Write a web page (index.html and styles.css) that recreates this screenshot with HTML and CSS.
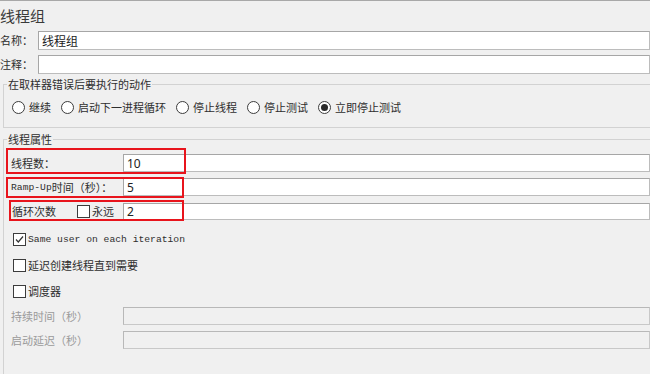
FILE: index.html
```html
<!DOCTYPE html>
<html lang="zh">
<head>
<meta charset="utf-8">
<link rel="stylesheet" href="styles.css">
</head>
<body>
<div class="page">
  <div class="title">线程组</div>
  <div class="field-row">
    <span class="lbl">名称：</span><span class="input">线程组</span>
  </div>
  <div class="field-row second">
    <span class="lbl">注释：</span><span class="input"></span>
  </div>

  <fieldset class="group g1">
    <legend>在取样器错误后要执行的动作</legend>
    <div class="radios">
      <span class="radio-item"><span class="radio"></span>继续</span>
      <span class="radio-item"><span class="radio"></span>启动下一进程循环</span>
      <span class="radio-item"><span class="radio"></span>停止线程</span>
      <span class="radio-item"><span class="radio"></span>停止测试</span>
      <span class="radio-item"><span class="radio checked"></span>立即停止测试</span>
    </div>
  </fieldset>

  <fieldset class="group g2">
    <legend>线程属性</legend>
    <div class="prop-row r1">
      <span class="plbl">线程数：</span><span class="input val">10</span>
    </div>
    <div class="prop-row r2">
      <span class="plbl"><span class="mono">Ramp-Up</span>时间（秒）：</span><span class="input val">5</span>
    </div>
    <div class="prop-row r3">
      <span class="plbl loop"><span class="loop-text">循环次数</span><span class="check"></span><span class="forever">永远</span></span><span class="input val">2</span>
    </div>
    <div class="check-row c1">
      <span class="check checked"><svg width="11" height="11" viewBox="0 0 11 11"><path d="M2 5.5 L4.3 8 L9 2.5" fill="none" stroke="#333" stroke-width="1.2"/></svg></span><span class="mono same">Same user on each iteration</span>
    </div>
    <div class="check-row">
      <span class="check"></span><span>延迟创建线程直到需要</span>
    </div>
    <div class="check-row">
      <span class="check"></span><span>调度器</span>
    </div>
    <div class="prop-row d1 disabled">
      <span class="plbl">持续时间（秒）</span><span class="input dis"></span>
    </div>
    <div class="prop-row d2 disabled">
      <span class="plbl">启动延迟（秒）</span><span class="input dis"></span>
    </div>
  </fieldset>

  <div class="mark m1"></div>
  <div class="mark m2"></div>
  <div class="mark m3"></div>
</div>
</body>
</html>
```
FILE: styles.css
```css
html, body {
  margin: 0;
  padding: 0;
  background: #f0f0f0;
}
body {
  font-family: "Noto Sans CJK SC", "Noto Sans", sans-serif;
  font-size: 11px;
  color: #2e2e2e;
  overflow: hidden;
  height: 374px;
}
.page {
  position: relative;
  border-top: 1px solid #a8a8a8;
}
.title {
  height: 30px;
  line-height: 30px;
  font-size: 15px;
  color: #3a3a3a;
  padding-left: 0;
}
.field-row {
  display: flex;
  align-items: center;
  height: 19px;
}
.field-row.second {
  margin-top: 5px;
}
.lbl {
  width: 38px;
  flex: none;
  line-height: 19px;
}
.input {
  flex: 1;
  box-sizing: border-box;
  height: 100%;
  background: #fff;
  border: 1px solid #bcbcbc;
  border-top-color: #a6a6a6;
  border-left-color: #a6a6a6;
  padding-left: 3px;
  display: flex;
  align-items: center;
  font-size: 12px;
  color: #222;
}
.group {
  margin: 3px 0 0 3px;
  padding: 0;
  border: 1px solid #d2d2d2;
  border-right: none;
  min-width: 0;
}
.group legend {
  margin-left: 3px;
  padding: 0 1px;
  line-height: 14px;
  height: 14px;
  color: #2e2e2e;
}
.g1 {
  padding-bottom: 13px;
}
.radios {
  display: flex;
  align-items: center;
  gap: 10px;
  height: 14px;
  margin-top: 9px;
  padding-left: 8px;
}
.radio-item {
  display: flex;
  align-items: center;
  gap: 4px;
  line-height: 14px;
}
.radio {
  width: 13px;
  height: 13px;
  box-sizing: border-box;
  border: 1px solid #3c3c3c;
  border-radius: 50%;
  background: #fff;
  display: flex;
  align-items: center;
  justify-content: center;
}
.radio.checked::after {
  content: "";
  width: 7px;
  height: 7px;
  border-radius: 50%;
  background: #2a2a2a;
}
.g2 {
  margin-top: 4px;
  padding: 8px 0 40px 0;
}
.g2 > .prop-row,
.g2 > .check-row {
  margin-left: 7px;
}
.prop-row {
  display: flex;
  align-items: center;
  height: 18px;
}
.r2 {
  margin-top: 6px;
}
.r3 {
  margin-top: 7px;
  height: 17px;
}
.plbl {
  width: 112px;
  flex: none;
  line-height: 17px;
  display: flex;
  align-items: center;
}
.mono {
  font-family: "Liberation Mono", "DejaVu Sans Mono", monospace;
  font-size: 9.7px;
}
.loop-text {
  padding-left: 1px;
  width: 65px;
}
.forever {
  margin-left: 2px;
}
.val {
  font-family: "Noto Sans", "Liberation Sans", sans-serif;
  font-size: 12px;
}
.check {
  width: 13px;
  height: 13px;
  box-sizing: border-box;
  border: 1px solid #3c3c3c;
  background: #fff;
  display: flex;
  align-items: center;
  justify-content: center;
  flex: none;
}
.check-row {
  display: flex;
  align-items: center;
  gap: 2px;
  height: 14px;
  margin-top: 12px;
  padding-left: 2px;
}
.check-row.c1 {
  margin-top: 12px;
}
.same {
  color: #2e2e2e;
}
.d1 {
  margin-top: 9px;
}
.d2 {
  margin-top: 6px;
}
.disabled .plbl {
  color: #9a9a9a;
}
.input.dis {
  background: #f0f0f0;
  border-color: #c8c8c8;
  border-top-color: #b8b8b8;
  border-left-color: #b8b8b8;
}
.mark {
  position: absolute;
  box-sizing: border-box;
  border: 2px solid #e8141c;
}
.m1 {
  left: 6px;
  top: 147px;
  width: 180px;
  height: 26px;
}
.m2 {
  left: 6px;
  top: 176px;
  width: 178px;
  height: 21px;
}
.m3 {
  left: 9px;
  top: 199px;
  width: 175px;
  height: 21px;
}
```
